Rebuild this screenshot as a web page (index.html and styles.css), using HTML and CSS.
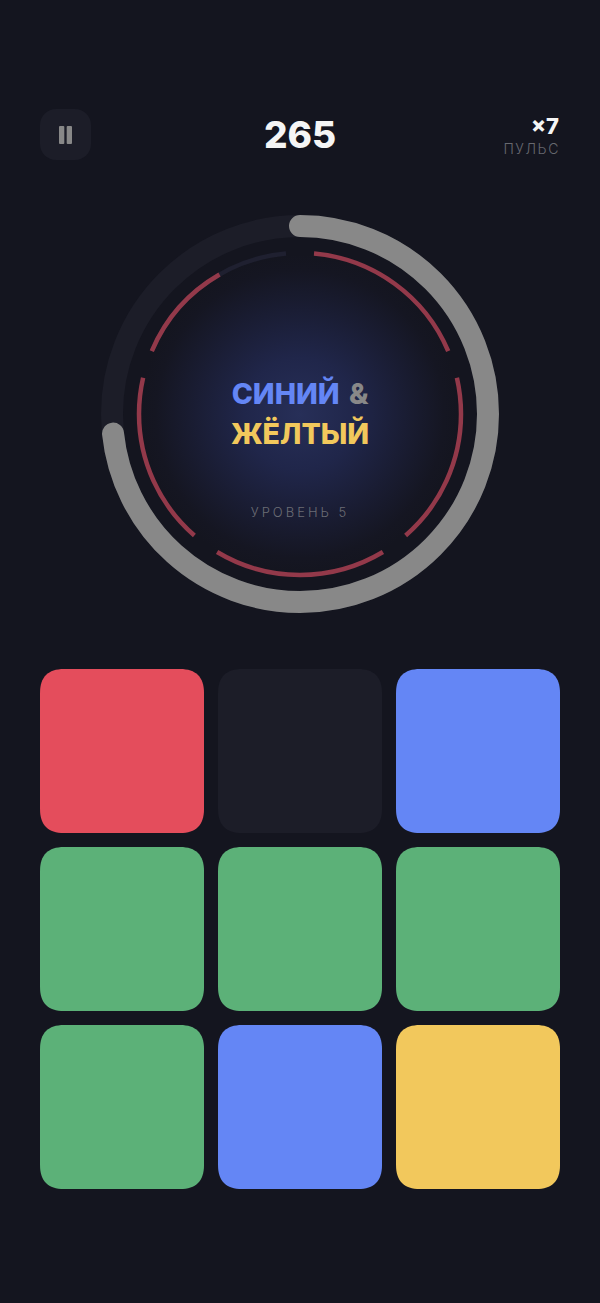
FILE: index.html
```html
<!DOCTYPE html>
<html lang="ru">
<head>
    <meta charset="UTF-8">
    <meta name="viewport" content="width=device-width, initial-scale=1.0">
    <title>Пульс</title>
    <link rel="stylesheet" href="styles.css">
</head>
<body>
    <div class="game">
        <!-- Top bar -->
        <header class="top-bar">
            <button class="pause-button" type="button" aria-label="Пауза">
                <svg width="13" height="18" viewBox="0 0 13 18">
                    <rect x="0" y="0" width="5.3" height="18" rx="1"></rect>
                    <rect x="7.7" y="0" width="5.3" height="18" rx="1"></rect>
                </svg>
            </button>
            <div class="score">265</div>
            <div class="combo">
                <div class="combo-value">×7</div>
                <div class="combo-label">ПУЛЬС</div>
            </div>
        </header>

        <!-- Timer ring -->
        <section class="ring">
            <div class="ring-glow"></div>
            <svg class="ring-svg" width="400" height="400" viewBox="0 0 400 400">
                <circle class="timer-track" cx="200" cy="200" r="188"></circle>
                <circle class="timer-fill" cx="200" cy="200" r="188" pathLength="360" stroke-dasharray="264 360"></circle>
                <g class="beats">
                    <circle class="beat beat-on" cx="200" cy="200" r="161" pathLength="360" stroke-dasharray="62 298" stroke-dashoffset="-5"></circle>
                    <circle class="beat beat-on" cx="200" cy="200" r="161" pathLength="360" stroke-dasharray="62 298" stroke-dashoffset="-77"></circle>
                    <circle class="beat beat-on" cx="200" cy="200" r="161" pathLength="360" stroke-dasharray="62 298" stroke-dashoffset="-149"></circle>
                    <circle class="beat beat-on" cx="200" cy="200" r="161" pathLength="360" stroke-dasharray="62 298" stroke-dashoffset="-221"></circle>
                    <circle class="beat beat-off" cx="200" cy="200" r="161" pathLength="360" stroke-dasharray="62 298" stroke-dashoffset="-293"></circle>
                    <circle class="beat beat-on" cx="200" cy="200" r="161" pathLength="360" stroke-dasharray="37 323" stroke-dashoffset="-293"></circle>
                </g>
            </svg>
            <div class="ring-text">
                <div class="prompt">
                    <div><span class="word-blue">СИНИЙ</span> <span class="word-and">&amp;</span></div>
                    <div class="word-yellow">ЖЁЛТЫЙ</div>
                </div>
                <div class="level">УРОВЕНЬ 5</div>
            </div>
        </section>

        <!-- Colour pads -->
        <section class="pads">
            <div class="pad pad-red"></div>
            <div class="pad pad-empty"></div>
            <div class="pad pad-blue"></div>
            <div class="pad pad-green"></div>
            <div class="pad pad-green"></div>
            <div class="pad pad-green"></div>
            <div class="pad pad-green"></div>
            <div class="pad pad-blue"></div>
            <div class="pad pad-yellow"></div>
        </section>
    </div>
</body>
</html>
```

FILE: styles.css
```css
* {
    margin: 0;
    padding: 0;
    box-sizing: border-box;
    font-family: Inter, 'Liberation Sans', sans-serif;
}

body {
    background-color: #14151f;
    min-height: 100vh;
}

.game {
    width: 600px;
    padding: 109px 40px 0;
}

.top-bar {
    display: grid;
    grid-template-columns: 1fr auto 1fr;
    align-items: center;
    height: 51px;
}

.pause-button {
    width: 51px;
    height: 51px;
    display: flex;
    align-items: center;
    justify-content: center;
    background-color: #1c1d28;
    border: none;
    border-radius: 16px;
}

.pause-button rect {
    fill: #888888;
}

.score {
    color: #f5f5f5;
    font-size: 37px;
    font-weight: 800;
    line-height: 50px;
}

.combo {
    text-align: right;
}

.combo-value {
    color: #f5f5f5;
    font-size: 22px;
    font-weight: 800;
    line-height: 24px;
    margin-top: 3px;
    margin-right: 1px;
}

.combo-label {
    color: #67686f;
    font-size: 14px;
    font-weight: 300;
    letter-spacing: 1.6px;
    line-height: 18px;
    margin-top: 2px;
}

.ring {
    position: relative;
    width: 400px;
    height: 400px;
    margin: 54px auto 0;
}

.ring-glow {
    position: absolute;
    inset: 40px;
    border-radius: 50%;
    background: radial-gradient(circle closest-side, #272f58 0%, #20264a 35%, #1a1d34 65%, #151622 90%, #14151f 100%);
}

.ring-svg {
    position: absolute;
    inset: 0;
    transform: rotate(-90deg);
}

.ring-svg circle {
    fill: none;
}

.timer-track {
    stroke: #1c1d28;
    stroke-width: 22;
}

.timer-fill {
    stroke: #888888;
    stroke-width: 22;
    stroke-linecap: round;
}

.beat {
    stroke-width: 4.5;
}

.beat-on {
    stroke: #93394a;
}

.beat-off {
    stroke: #1f2030;
}

.ring-text {
    position: absolute;
    inset: 0;
    text-align: center;
}

.prompt {
    padding-top: 160px;
    font-size: 28.5px;
    font-weight: 800;
    line-height: 40px;
    word-spacing: 3px;
}

.word-blue {
    color: #6486f5;
}

.word-and {
    color: #888888;
}

.word-yellow {
    color: #f2c85c;
}

.level {
    margin-top: 49px;
    color: #6c6d75;
    font-size: 13px;
    font-weight: 300;
    letter-spacing: 3px;
    line-height: 18px;
}

.pads {
    display: grid;
    grid-template-columns: repeat(3, 164px);
    grid-auto-rows: 164px;
    gap: 14px;
    margin-top: 55px;
}

.pad {
    clip-path: path("M24 0H140C156 0 164 8 164 24V140C164 156 156 164 140 164H24C8 164 0 156 0 140V24C0 8 8 0 24 0Z");
}

.pad-red {
    background-color: #e44d5c;
}

.pad-empty {
    background-color: #1c1d28;
}

.pad-blue {
    background-color: #6486f5;
}

.pad-green {
    background-color: #5cb178;
}

.pad-yellow {
    background-color: #f2c85c;
}
```
